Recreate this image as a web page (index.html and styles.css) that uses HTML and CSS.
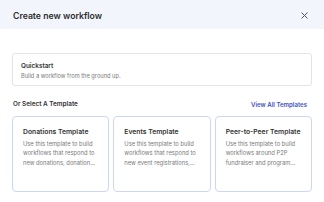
FILE: index.html
```html
<!DOCTYPE html>
<html>
<head>
<meta charset="utf-8">
<link rel="stylesheet" href="styles.css">
</head>
<body>
<div class="modal">
  <div class="header">
    <div class="title">Create new workflow</div>
    <svg class="close" width="7" height="7" viewBox="0 0 7 7"><path d="M0.5 0.5L6.5 6.5M6.5 0.5L0.5 6.5" stroke="#555" stroke-width="1" fill="none"/></svg>
  </div>
  <div class="body">
    <div class="quick">
      <div class="quick-title">Quickstart</div>
      <div class="quick-sub">Build a workflow from the ground up.</div>
    </div>
    <div class="section-head">
      <div class="section-title">Or Select A Template</div>
      <div class="link">View All Templates</div>
    </div>
    <div class="cards">
      <div class="card">
        <div class="card-title">Donations Template</div>
        <div class="card-desc">Use this template to build<br>workflows that respond to<br>new donations, donation...</div>
      </div>
      <div class="card">
        <div class="card-title">Events Template</div>
        <div class="card-desc">Use this template to build<br>workflows that respond to<br>new event registrations,...</div>
      </div>
      <div class="card">
        <div class="card-title">Peer-to-Peer Template</div>
        <div class="card-desc">Use this template to build<br>workflows around P2P<br>fundraiser and program...</div>
      </div>
    </div>
  </div>
</div>
</body>
</html>
```
FILE: styles.css
```css
* { box-sizing: border-box; }
body { margin: 0; background: #fff; font-family: Inter, "Noto Sans", sans-serif; color: #333; }
.header {
  height: 29px;
  background: #f3f5fc;
  display: flex;
  align-items: center;
  justify-content: space-between;
  padding: 2px 16px 0 13px;
}
.title { font-size: 8.7px; font-weight: 600; color: #2e2e2e; white-space: nowrap; }
.close { display: block; }
.body { padding: 24px 12px 0 12px; }
.quick {
  height: 33px;
  border: 1px solid #e3e4e8;
  border-radius: 3px;
  padding: 8px 8px 0 8px;
}
.quick-title { font-size: 6.4px; font-weight: 600; color: #333; line-height: 9px; }
.quick-sub { font-size: 5.7px; color: #7a7a7a; line-height: 10px; }
.section-head {
  display: flex;
  justify-content: space-between;
  align-items: center;
  margin-top: 13px;
  padding: 0 5px 0 1px;
  height: 10px;
}
.section-title { font-size: 6.4px; font-weight: 600; color: #333; white-space: nowrap; }
.link { font-size: 6.1px; font-weight: 600; color: #3d50c4; white-space: nowrap; }
.cards {
  display: grid;
  grid-template-columns: repeat(3, 1fr);
  gap: 4px;
  margin-top: 7px;
}
.card {
  height: 76px;
  border: 1px solid #cdd6f6;
  border-radius: 4px;
  padding: 10px 8px 0 10px;
}
.card-title { font-size: 6.8px; font-weight: 600; color: #333; line-height: 10px; white-space: nowrap; }
.card-desc { font-size: 5.8px; color: #7a7a7a; line-height: 9.8px; margin-top: 1.5px; white-space: nowrap; }
```
